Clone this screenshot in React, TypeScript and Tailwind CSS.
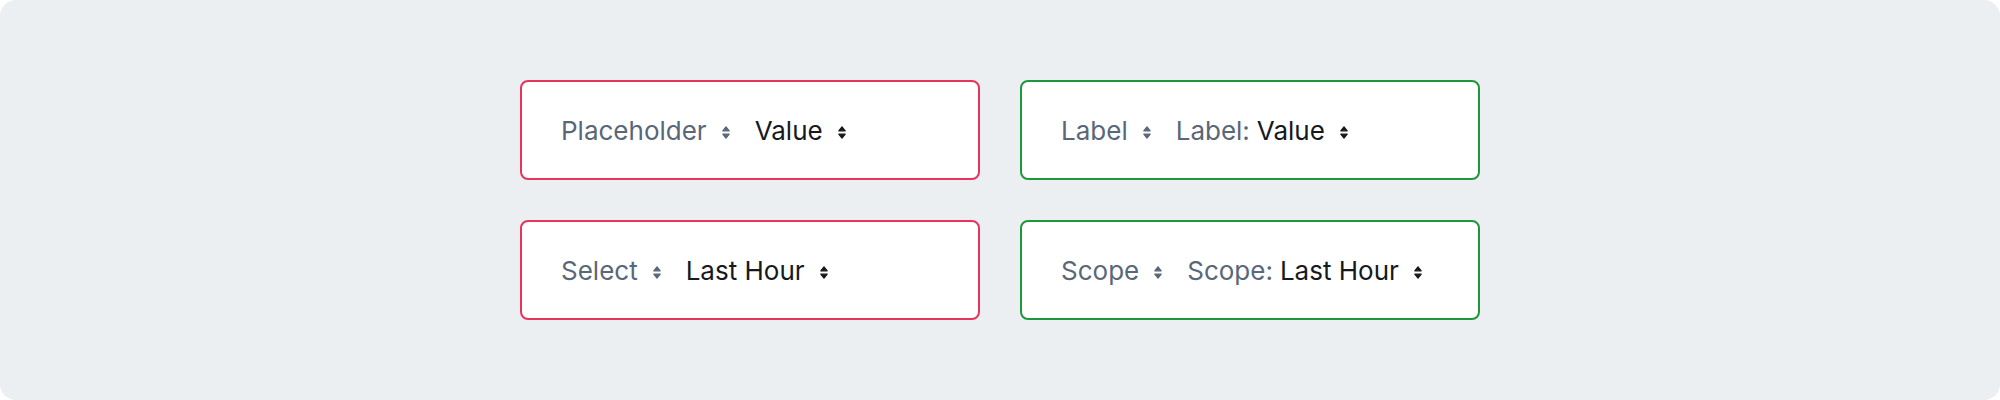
import React from "react";

function Sorter({ color }: { color: string }) {
  return (
    <svg width="8" height="13" viewBox="0 0 8 13" className="ml-[15px] mt-[2px] shrink-0" aria-hidden>
      <path d="M4 0.8 L7.2 4.8 H0.8 Z" fill={color} stroke={color} strokeWidth="1.2" strokeLinejoin="round" />
      <path d="M0.8 8.2 H7.2 L4 12.2 Z" fill={color} stroke={color} strokeWidth="1.2" strokeLinejoin="round" />
    </svg>
  );
}

function Card({
  tone,
  placeholder,
  prefix,
  value,
}: {
  tone: "red" | "green";
  placeholder: string;
  prefix?: string;
  value: string;
}) {
  return (
    <div
      className={
        tone === "red"
          ? "flex h-[100px] w-[460px] items-center rounded-[8px] border-2 border-[#e8335a] bg-white pl-[39px] pt-[2px]"
          : "flex h-[100px] w-[460px] items-center rounded-[8px] border-2 border-[#1e973a] bg-white pl-[39px] pt-[2px]"
      }
    >
      <div className="flex items-center text-[26px] leading-none text-[#5a6779]">
        <span>{placeholder}</span>
        <Sorter color="#5a6779" />
      </div>
      <div className="ml-[25px] flex items-center text-[26px] leading-none">
        {prefix && <span className="mr-[7px] text-[#5a6779]">{prefix}</span>}
        <span className="text-[#16191d]">{value}</span>
        <Sorter color="#16191d" />
      </div>
    </div>
  );
}

export default function App() {
  return (
    <div className="flex h-[400px] w-[2000px] items-start justify-center rounded-[16px] bg-[#eceff2] pt-20 font-['Inter',sans-serif]">
      <div className="grid grid-cols-[460px_460px] content-start gap-10">
        <Card tone="red" placeholder="Placeholder" value="Value" />
        <Card tone="green" placeholder="Label" prefix="Label:" value="Value" />
        <Card tone="red" placeholder="Select" value="Last Hour" />
        <Card tone="green" placeholder="Scope" prefix="Scope:" value="Last Hour" />
      </div>
    </div>
  );
}
